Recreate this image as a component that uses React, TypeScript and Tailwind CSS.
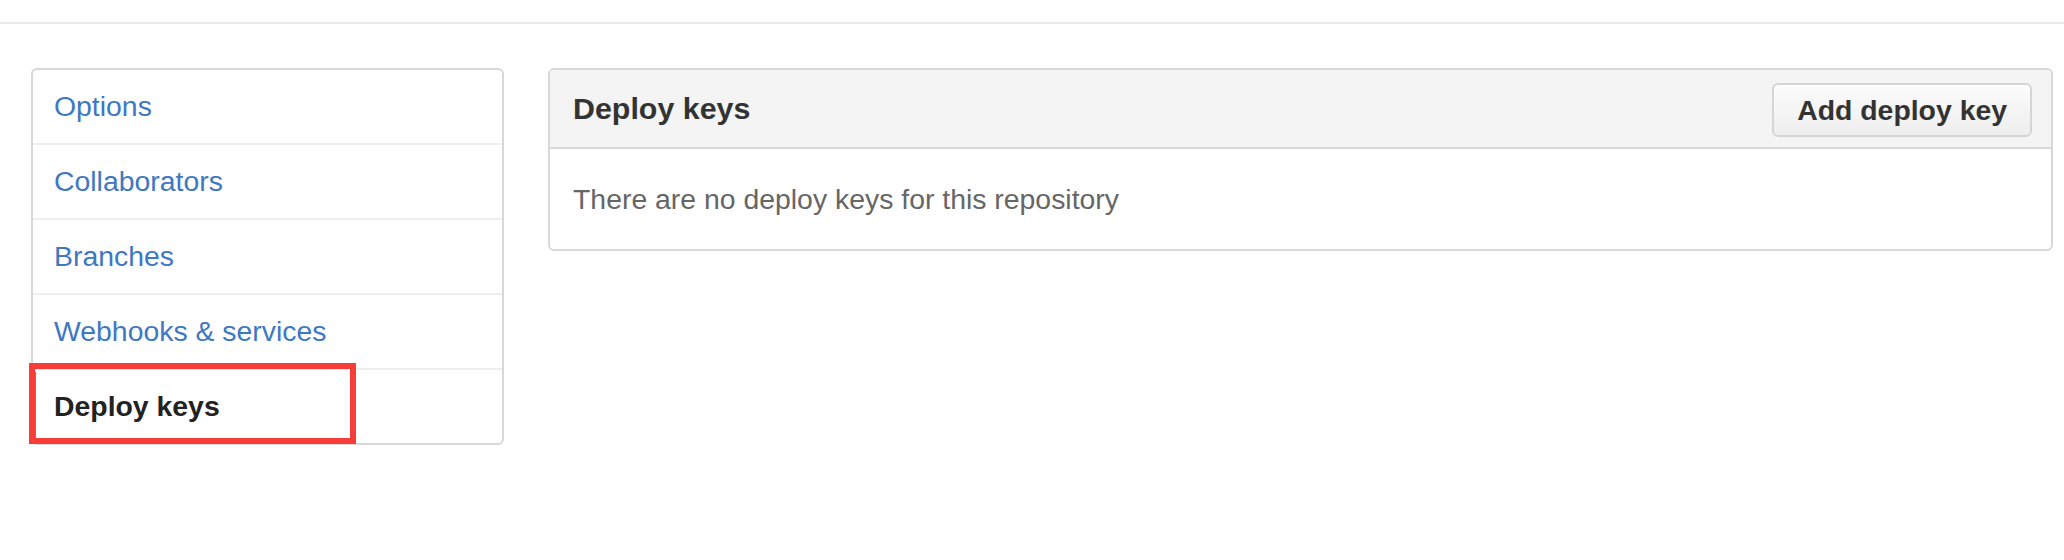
import React from "react";

const items = [
  { label: "Options", active: false },
  { label: "Collaborators", active: false },
  { label: "Branches", active: false },
  { label: "Webhooks & services", active: false },
  { label: "Deploy keys", active: true },
];

export default function App() {
  return (
    <div
      className="w-[2064px] h-[560px] bg-white overflow-hidden"
      style={{ fontFamily: '"Liberation Sans", Arial, Helvetica, sans-serif' }}
    >
      <div className="h-[22px] bg-white" />
      <div className="h-[2px] bg-[#e8e8e8]" />
      <div className="flex pl-[31px] pt-[44px] gap-[44px]">
        <div className="relative w-[473px] shrink-0">
          <nav className="border-2 border-[#d8d8d8] rounded-[6px] bg-white overflow-hidden">
            {items.map((it, i) => (
              <div
                key={it.label}
                className={
                  "relative h-[73px] flex items-center pl-[21px] text-[28.4px] leading-[41px] box-content " +
                  (i > 0 ? "border-t-2 border-[#eeeeee] " : "") +
                  (it.active ? "font-bold text-[#222222]" : "text-[#4078c0]")
                }
              >
                {it.active && (
                  <span className="absolute left-[1px] top-[2px] bottom-[5px] w-[2px] bg-[#d26911]" />
                )}
                {it.label}
              </div>
            ))}
          </nav>
          <div className="absolute left-[-2px] top-[295px] w-[327px] h-[81px] border-[6px] border-[#f73d3a] pointer-events-none" />
        </div>
        <div className="w-[1505px] shrink-0 border-2 border-[#d8d8d8] rounded-[6px] overflow-hidden self-start">
          <div className="h-[79px] bg-[#f4f4f4] border-b-2 border-[#d8d8d8] flex items-center justify-between pl-[23px] pr-[19px]">
            <h3 className="text-[30.4px] font-bold text-[#333333] leading-none">Deploy keys</h3>
            <button className="h-[54px] px-[23px] border-2 border-[#d5d5d5] rounded-[6px] bg-gradient-to-b from-[#fcfcfc] to-[#eeeeee] text-[28.4px] font-bold text-[#333333] leading-none mt-[3px]">
              Add deploy key
            </button>
          </div>
          <div className="h-[100px] flex items-center pl-[23px] text-[28.4px] text-[#666666]">
            There are no deploy keys for this repository
          </div>
        </div>
      </div>
    </div>
  );
}
